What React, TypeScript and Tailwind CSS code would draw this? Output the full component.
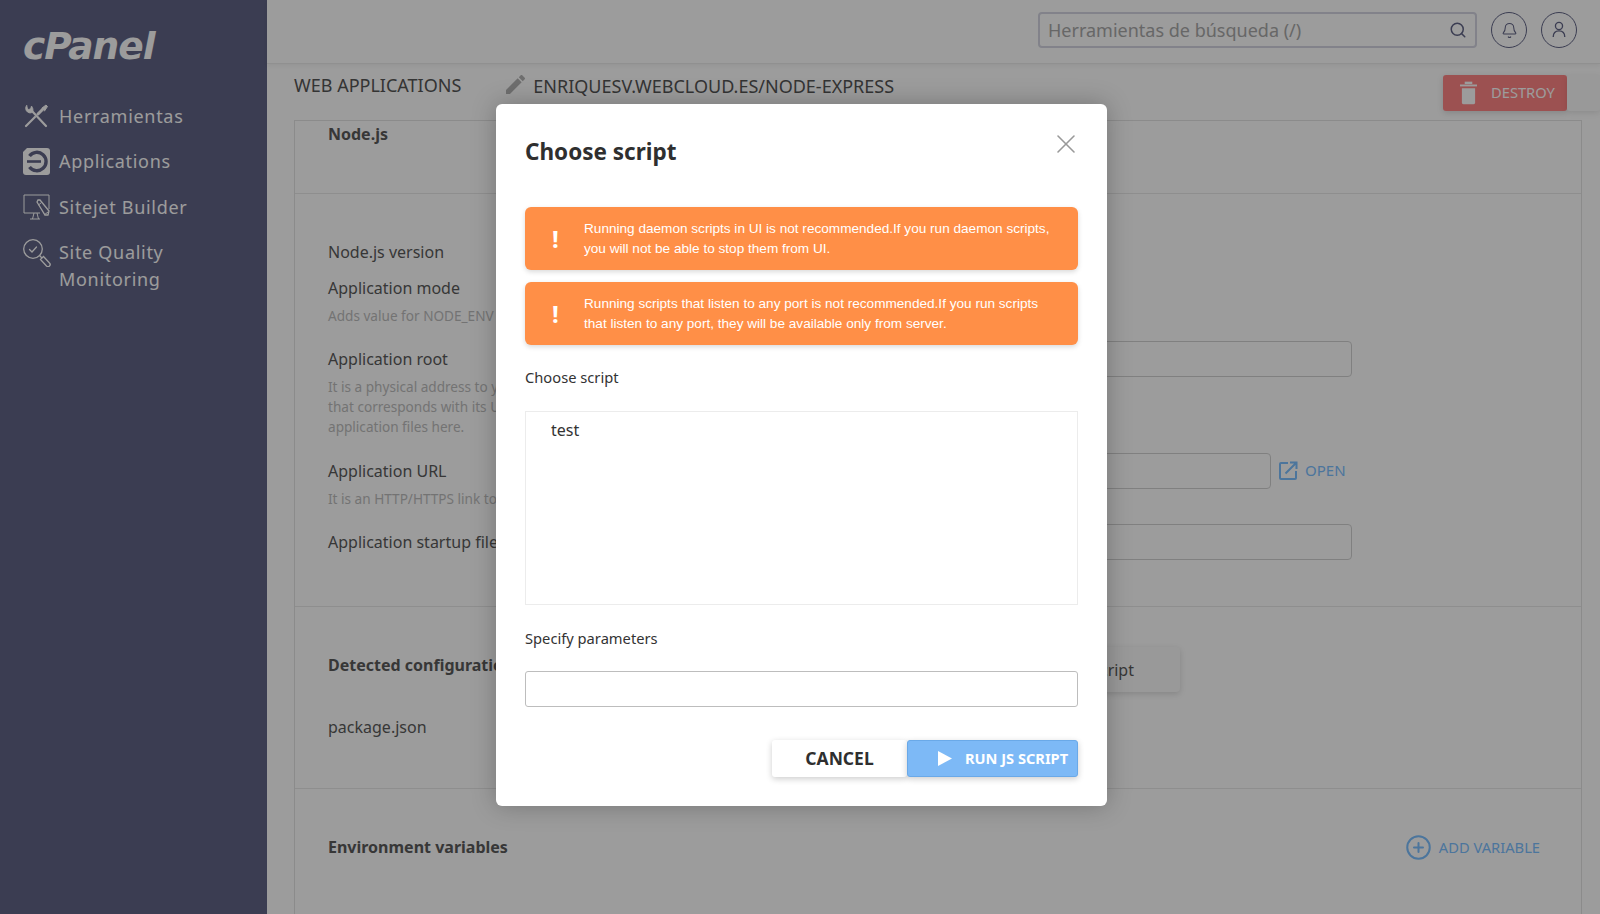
import { Bell, CirclePlus, Search, X } from 'lucide-react';

function ToolsIcon() {
  return (
    <svg width="27" height="27" viewBox="0 0 27 27" fill="none" stroke="#fff" strokeWidth="2" strokeLinecap="round">
      <path d="M8.500 7.500L23 23" strokeWidth="2.200" />
      <path d="M3.500 2.500c-1.500 2-1 5 1 6.500s4 1 5 0c1-2 .5-4-1-6l-1 3-2.500.500z" fill="#fff" strokeWidth="0.800" />
      <path d="M3 23l9-9" strokeWidth="2.200" />
      <path d="M15 11l5-5" strokeWidth="3" />
      <path d="M19 5l4-3 1.500 1.500-3 4.500" fill="#fff" strokeWidth="1" />
    </svg>
  );
}

function AppsIcon() {
  return (
    <svg width="27" height="27" viewBox="0 0 27 27">
      <path d="M4 0h20a3 3 0 0 1 3 3v21a3 3 0 0 1-3 3H3a3 3 0 0 1-3-3V4z" fill="#fff" />
      <path d="M6.500 8a9.200 9.200 0 1 1 0 11" fill="none" stroke="#616486" strokeWidth="3.400" />
      <rect x="4" y="12.200" width="14" height="2.600" fill="#616486" />
    </svg>
  );
}

function SitejetIcon() {
  return (
    <svg width="27" height="27" viewBox="0 0 27 27" fill="none" stroke="#fff" strokeWidth="1">
      <path d="M26 15V1H1v18h16" />
      <path d="M7 25h10M11 19l-1.500 6M14 19l1.500 6" />
      <path d="M14 8l1-2 2 0 9 11-1 4-3 0z" fill="#616486" strokeWidth="1.300" />
      <path d="M15.500 11l3-2.500M21 21l4-3" />
    </svg>
  );
}

function QualityIcon() {
  return (
    <svg width="28" height="28" viewBox="0 0 28 28" fill="none" stroke="#fff" strokeWidth="1.300" strokeLinecap="round">
      <circle cx="10" cy="10" r="9.300" />
      <path d="M6.500 10.500l2.500 2.500 4.500-5" />
      <path d="M17 17l1.500 1.500" />
      <path d="M17.500 20.500l3-3 6 6.500a1.800 1.800 0 0 1-3 3z" />
    </svg>
  );
}

function UserIcon() {
  return (
    <svg width="16" height="18" viewBox="0 0 18 20" fill="none" stroke="#616486" strokeWidth="1.500">
      <circle cx="9" cy="5.500" r="4" />
      <path d="M2.500 18c0-4.500 2-7 6.500-7s6.500 2.500 6.500 7" />
    </svg>
  );
}

function TrashIcon() {
  return (
    <svg width="17" height="24" viewBox="0 0 18 24" fill="#fff">
      <rect x="0" y="3" width="18" height="2" />
      <rect x="5" y="0" width="8" height="2.500" />
      <path d="M2 7h14v15a2 2 0 0 1-2 2H4a2 2 0 0 1-2-2z" />
    </svg>
  );
}

function PencilIcon() {
  return (
    <svg width="19" height="19" viewBox="3 3 18 18" fill="#b4b4b4">
      <path d="M3 17.250V21h3.750L17.810 9.940l-3.750-3.750L3 17.250zM20.710 7.040a1 1 0 0 0 0-1.410l-2.340-2.340a1 1 0 0 0-1.410 0l-1.830 1.830 3.750 3.750 1.830-1.830z" />
    </svg>
  );
}

function OpenIcon() {
  return (
    <svg width="19" height="19" viewBox="0 0 19 19" fill="none" stroke="#7cc0ff" strokeWidth="2">
      <path d="M9 2H2a1 1 0 0 0-1 1v14a1 1 0 0 0 1 1h14a1 1 0 0 0 1-1v-7" />
      <path d="M6.500 12.500L17 2M11 1.500h6.500V8" />
    </svg>
  );
}

const navItems = [
  { icon: <ToolsIcon />, label: 'Herramientas' },
  { icon: <AppsIcon />, label: 'Applications' },
  { icon: <SitejetIcon />, label: 'Sitejet Builder' },
  { icon: <QualityIcon />, label: 'Site Quality Monitoring' },
];

function Sidebar() {
  return (
    <aside className="w-[267px] shrink-0 bg-[#616486] pl-[23px] pt-[26px] text-white">
      <div className="h-[40px] text-[37.500px] leading-[40px] font-bold italic tracking-[-1px] font-['DejaVu_Sans',sans-serif]">
        cPanel
      </div>
      <nav className="mt-[37px] flex flex-col gap-[18.400px]">
        {navItems.map((item) => (
          <div key={item.label} className="flex items-start gap-[8px]">
            <div className="w-[28px] shrink-0">{item.icon}</div>
            <span className="w-[150px] text-[18px] leading-[27px] tracking-[0.700px]">{item.label}</span>
          </div>
        ))}
      </nav>
    </aside>
  );
}

function Header() {
  return (
    <header className="h-[64px] flex items-center justify-end pb-[3px] pr-[23px] border-b border-[#ececec] shadow-[0_2px_4px_rgba(0,0,0,0.05)]">
      <div className="w-[439px] h-[36px] flex items-center justify-between px-[8px] rounded-[4px] border-2 border-[#d4d5e2]">
        <span className="text-[18px] text-[#a9a9a9]">Herramientas de búsqueda (/)</span>
        <Search size={18} strokeWidth={2} className="text-[#616486]" />
      </div>
      <div className="ml-[14px] w-[36px] h-[36px] flex items-center justify-center rounded-full border border-[#616486]">
        <Bell size={17} strokeWidth={1.500} className="text-[#616486]" />
      </div>
      <div className="ml-[14px] w-[36px] h-[36px] flex items-center justify-center rounded-full border border-[#616486]">
        <UserIcon />
      </div>
    </header>
  );
}

function FormRow({ label, desc, gap = 'mb-[21px]', children }: { label: string; desc?: string[]; gap?: string; children?: React.ReactNode }) {
  return (
    <div className={`flex items-start ${gap}`}>
      <div className="w-[372px] shrink-0 whitespace-nowrap">
        <div className="text-[16px] leading-[24px] text-[#5a5a5a]">{label}</div>
        {desc && (
          <div className="mt-[6px] text-[13.600px] leading-[20px] text-[#bdbdbd]">
            {desc.map((line) => (
              <div key={line}>{line}</div>
            ))}
          </div>
        )}
      </div>
      {children}
    </div>
  );
}

function Field({ width }: { width: string }) {
  return <div className={`${width} h-[36px] -mt-[6px] rounded-[4px] border border-[#d2d2d2]`} />;
}

function Content() {
  return (
    <main className="flex-1 min-w-0 bg-white">
      <Header />
      <div className="h-[56px] flex items-start pl-[27px] pt-[9px]">
        <span className="text-[18px] leading-[24px] text-[#555]">WEB APPLICATIONS</span>
        <div className="ml-[45px] mt-[2px]">
          <PencilIcon />
        </div>
        <span className="ml-[8px] mt-[1px] text-[18px] leading-[24px] text-[#555]">ENRIQUESV.WEBCLOUD.ES/NODE-EXPRESS</span>
        <div className="ml-auto mt-[2px] flex">
          <div className="w-[124px] h-[36px] flex items-center pl-[17px] pb-[1px] rounded-[3px] bg-[#ff8585] shadow-[0_2px_6px_rgba(0,0,0,0.15)] text-white">
            <TrashIcon />
            <span className="ml-[14px] text-[14.700px]">DESTROY</span>
          </div>
          <div className="w-[33px] h-[36px] rounded-[3px] bg-[#fafafa] shadow-[0_2px_6px_rgba(0,0,0,0.1)]" />
        </div>
      </div>
      <div className="ml-[27px] w-[1288px] border-x border-t border-[#e4e4e4]">
        <section className="h-[73px] pl-[33px] border-b border-[#e8e8e8]">
          <div className="text-[16px] leading-[24px] font-bold text-[#5a5a5a] pt-[1px]">Node.js</div>
        </section>
        <section className="h-[413px] pl-[33px] pt-[46px] border-b border-[#e8e8e8]">
          <FormRow label="Node.js version" gap="mb-[12px]" />
          <FormRow label="Application mode" desc={['Adds value for NODE_ENV variable']} />
          <FormRow
            label="Application root"
            gap="mb-[22px]"
            desc={[
              'It is a physical address to your application on a server',
              'that corresponds with its URI. Put your',
              'application files here.',
            ]}
          >
            <Field width="w-[652px]" />
          </FormRow>
          <FormRow label="Application URL" desc={['It is an HTTP/HTTPS link to your application']}>
            <Field width="w-[571px]" />
            <div className="flex items-center ml-[8px] -mt-[1px] text-[#7cc0ff]">
              <OpenIcon />
              <span className="ml-[7px] text-[15px] leading-[24px]">OPEN</span>
            </div>
          </FormRow>
          <FormRow label="Application startup file">
            <Field width="w-[652px]" />
          </FormRow>
        </section>
        <section className="h-[182px] pl-[33px] pt-[40px] border-b border-[#e8e8e8]">
          <div className="flex items-start h-[45px]">
            <div className="w-[372px] text-[16px] leading-[24px] mt-[6px] font-bold text-[#5a5a5a] whitespace-nowrap">Detected configuration</div>
            <div className="w-[480px] h-[45px] flex items-center justify-end pr-[46px] rounded-[4px] bg-[#fafafa] shadow-[0_2px_6px_rgba(0,0,0,0.15)] text-[16px] text-[#5a5a5a]">
              Run JS script
            </div>
          </div>
          <div className="mt-[23px] text-[16px] leading-[24px] text-[#5a5a5a]">package.json</div>
        </section>
        <section className="h-[200px] pl-[33px] pr-[41px] pt-[46px]">
          <div className="flex items-center justify-between h-[24px]">
            <span className="text-[16px] font-bold text-[#5a5a5a]">Environment variables</span>
            <div className="flex items-center text-[#7cc0ff]">
              <CirclePlus size={27} strokeWidth={1.800} />
              <span className="ml-[7px] text-[14.700px]">ADD VARIABLE</span>
            </div>
          </div>
        </section>
      </div>
    </main>
  );
}

const warnings = [
  ['Running daemon scripts in UI is not recommended.If you run daemon scripts,', 'you will not be able to stop them from UI.'],
  ['Running scripts that listen to any port is not recommended.If you run scripts', 'that listen to any port, they will be available only from server.'],
];

function ScriptDialog() {
  return (
    <div className="absolute left-[496px] top-[104px] w-[611px] px-[29px] pt-[32px] pb-[29px] rounded-[6px] bg-white shadow-[0_0_24px_rgba(0,0,0,0.25)] text-[#333]">
      <X size={32} strokeWidth={1.200} className="absolute right-[25px] top-[24px] text-[#999]" />
      <h2 className="h-[31px] text-[22.500px] leading-[32px] font-bold text-[#2f2f2f]">Choose script</h2>
      <div className="mt-[40px] flex flex-col gap-[12px]">
        {warnings.map((lines) => (
          <div key={lines[0]} className="h-[63px] flex items-center rounded-[6px] bg-[#ff8f47] shadow-[0_2px_5px_rgba(0,0,0,0.15)] text-white">
            <span className="w-[59px] pl-[2px] text-center text-[24px] font-bold">!</span>
            <div className="text-[13.600px] leading-[20px] font-['Liberation_Sans',sans-serif]">
              {lines.map((line) => (
                <div key={line}>{line}</div>
              ))}
            </div>
          </div>
        ))}
      </div>
      <div className="mt-[20px] text-[14.700px] leading-[24px]">Choose script</div>
      <div className="mt-[22px] h-[194px] border border-[#ececec] pl-[25px] pt-[6px] text-[16px] leading-[24px]">test</div>
      <div className="mt-[21px] text-[14.700px] leading-[24px]">Specify parameters</div>
      <div className="mt-[21px] h-[36px] rounded-[3px] border border-[#bdbdbd]" />
      <div className="mt-[33px] h-[37px] flex justify-end">
        <div className="w-[135px] flex items-center justify-center rounded-[3px] bg-white shadow-[0_2px_6px_rgba(0,0,0,0.2)] text-[17.500px] font-bold text-[#2f2f2f]">
          CANCEL
        </div>
        <div className="w-[171px] flex items-center pl-[30px] rounded-[3px] border border-[#6aa9e8] bg-[#7db9f6] shadow-[0_2px_6px_rgba(0,0,0,0.2)] text-white">
          <svg width="14" height="15" viewBox="0 0 14 15" fill="#fff" className="shrink-0">
            <path d="M0 0l14 7.500L0 15z" />
          </svg>
          <span className="ml-[13px] text-[14.600px] font-bold whitespace-nowrap">RUN JS SCRIPT</span>
        </div>
      </div>
    </div>
  );
}

export default function App() {
  return (
    <div className="relative h-[914px] flex overflow-hidden font-['Noto_Sans',sans-serif]">
      <Sidebar />
      <Content />
      <div className="absolute inset-0 bg-black/[0.39]" />
      <ScriptDialog />
    </div>
  );
}
